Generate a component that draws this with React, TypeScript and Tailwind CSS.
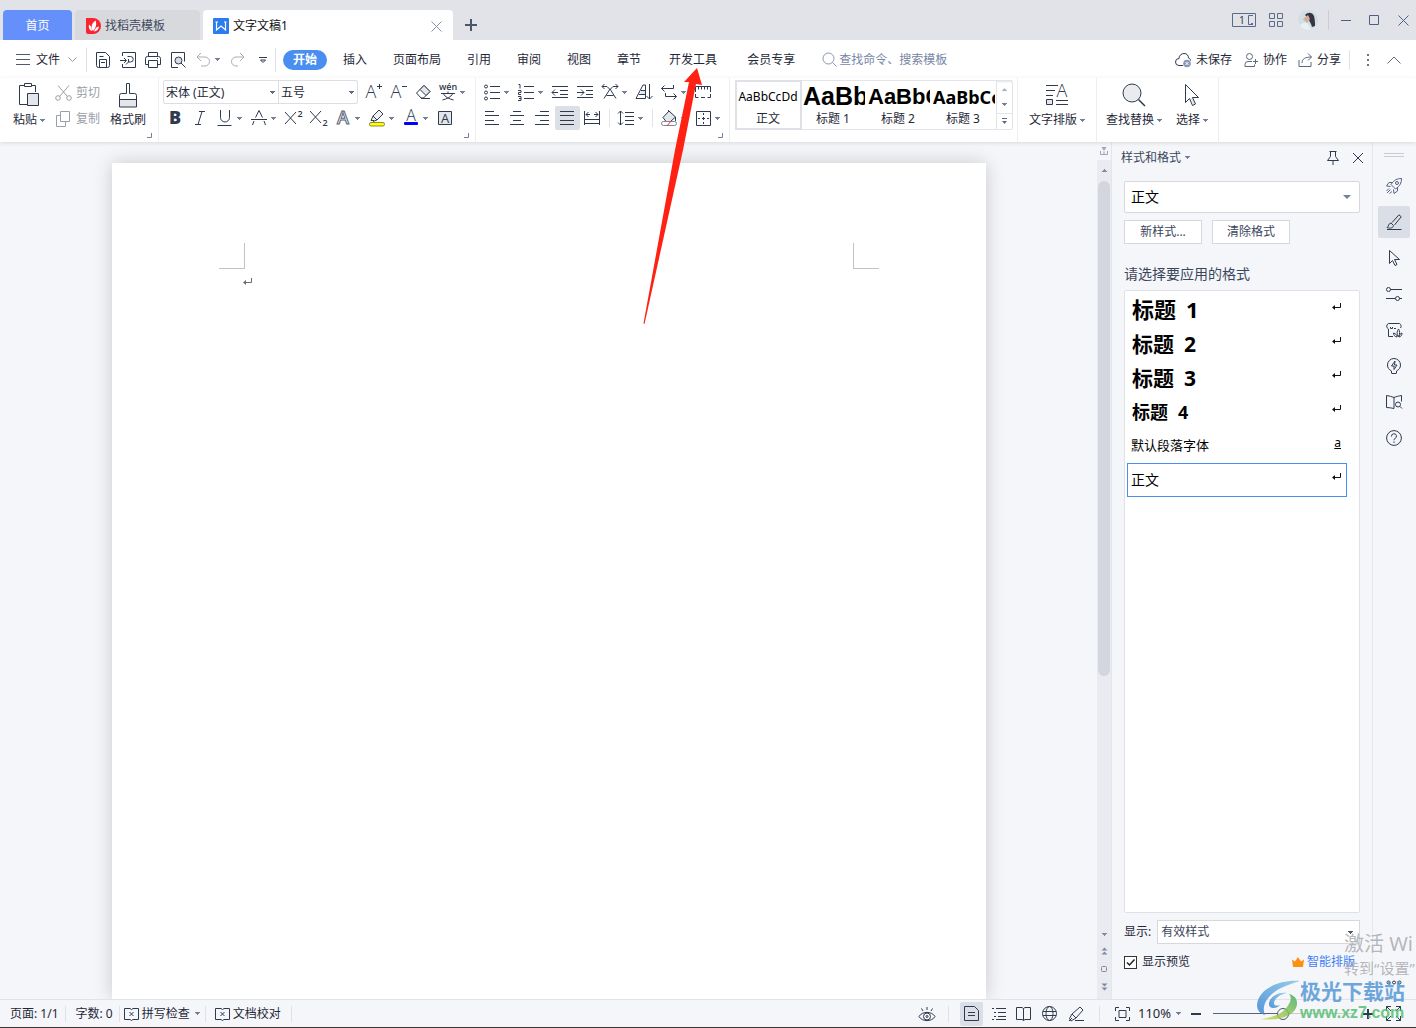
import { useState } from 'react'
import type { ReactNode } from 'react'

const INK = '#2f3a4f'

interface IconProps {
  children: ReactNode
  w?: number
  h?: number
  color?: string
  sw?: number
}

function Icon({ children, w = 20, h = 20, color = INK, sw = 1 }: IconProps) {
  return (
    <svg width={w} height={h} viewBox={`0 0 ${w} ${h}`} fill="none" stroke={color} strokeWidth={sw} className="shrink-0 overflow-visible" aria-hidden="true">
      {children}
    </svg>
  )
}

function Caret({ color = '#74809a' }: { color?: string }) {
  return (
    <svg width="5" height="3" viewBox="0 0 5 3" fill={color} className="shrink-0" aria-hidden="true">
      <path d="M0 0h5v1H4v1H3v1H2V2H1V1H0z" />
    </svg>
  )
}

// Single glyph used inside a toolbar icon
function Glyph({ x, y, size, weight = 300, color = INK, children }: { x: number; y: number; size: number; weight?: number; color?: string; children: string }) {
  return (
    <text x={x} y={y} fontSize={size} fontWeight={weight} fill={color} stroke="none" textAnchor="middle" fontFamily='"Open Sans", "Noto Sans CJK SC", sans-serif'>
      {children}
    </text>
  )
}

function Tool({ label, children, active = false }: { label: string; children: ReactNode; active?: boolean }) {
  return (
    <button aria-label={label} className={`flex h-6 w-[25px] shrink-0 items-center justify-center rounded-xs pr-px ${active ? 'bg-[#dbe0e7]' : ''}`}>
      {children}
    </button>
  )
}

function DropTool({ label, children }: { label: string; children: ReactNode }) {
  return (
    <button aria-label={label} className="flex h-6 w-[34px] shrink-0 items-center gap-0.5 pl-0.5">
      {children}
      <Caret />
    </button>
  )
}

function Launcher() {
  return (
    <button aria-label="更多设置" className="absolute right-1.5 bottom-1">
      <Icon w={5} h={5} color="#74809a"><path d="M4.500 0v4.500H0" /></Icon>
    </button>
  )
}

const divider = 'w-px shrink-0 bg-[#dfe1e6]'

function TitleBar() {
  return (
    <header className="flex h-10 shrink-0 items-end bg-[#e2e3e8] pl-[3px]">
      <button className="h-[30px] w-[69px] rounded-t-sm bg-[#6590fb] pt-0.5 text-white">首页</button>
      <button className="ml-[3px] flex h-[30px] w-[125px] items-center gap-1 rounded-t-sm bg-[#d8d9dd] pt-0.5 pl-[11px] text-[#3f4a60]">
        <svg width="15" height="16" viewBox="0 0 15 16" aria-hidden="true">
          <path d="M0 0h7a8 8 0 0 1 0 16H2a2 2 0 0 1-2-2z" fill="#fb2431" />
          <path d="M7 13C4 9 6 5 9.500 2.500C11 6 10 10 7 13z" fill="#fff" />
          <path d="M6 13C3 12 2.500 9 3 6.500C5 8 6 10 6 13zM8 13.500C9 10.500 10.500 9 13 8.500C12.500 11.500 11 13 8 13.500z" fill="#fff" />
        </svg>
        找稻壳模板
      </button>
      <div className="ml-[3px] flex h-[30px] w-[250px] items-center rounded-t-sm bg-white pt-0.5 pr-[11px] pl-[10px]">
        <svg width="16" height="16" viewBox="0 0 16 16" aria-hidden="true">
          <rect width="16" height="16" rx="1" fill="#2c7cf0" />
          <path d="M3.500 4v8L8 8l4.500 4V4M2.500 4H5M11 4h2.500" fill="none" stroke="#fff" strokeWidth="1.200" />
        </svg>
        <span className="ml-1 flex-1 text-[#111]">文字文稿1</span>
        <button aria-label="关闭标签">
          <Icon w={11} h={11} color="#8590a8"><path d="M.5.5l10 10M10.500.5l-10 10" /></Icon>
        </button>
      </div>
      <button aria-label="新建" className="ml-3 flex h-[30px] items-center">
        <Icon w={12} h={12} color="#4b566d" sw={2}><path d="M6 0v12M0 6h12" /></Icon>
      </button>
      <div className="ml-auto flex h-10 items-center pr-[7px]">
        <button aria-label="窗口布局">
          <Icon w={24} h={14} color="#5a6a88"><path d="M.5.5h23v13H.5zM21 2.500h-4.500v9H21M19 10.500h2" /><Glyph x={10} y={11} size={11} weight={400}>1</Glyph></Icon>
        </button>
        <button aria-label="应用" className="ml-[13px]">
          <Icon w={14} h={14} color="#5a6a88"><path d="M.5.5h5v5h-5zM8.500.5h5v5h-5zM.5 8.500h5v5h-5zM8.500 8.500h5v5h-5z" /></Icon>
        </button>
        <svg width="20" height="20" viewBox="0 0 20 20" className="ml-[15px]" aria-hidden="true">
          <clipPath id="face"><circle cx="10" cy="10" r="10" /></clipPath>
          <g clipPath="url(#face)">
            <rect width="20" height="20" fill="#cfdfe3" />
            <path d="M7 5c3-3 7-3 9 1 1 4 1 7 1 10l-3 1c-1-4-3-6-4-9z" fill="#383440" />
            <path d="M5 9l5-4 2 4-3 4z" fill="#d9aa9e" />
            <path d="M1 20c0-6 4-8 8-7l5 7z" fill="#e9f0f2" />
          </g>
        </svg>
        <span className="ml-[10px] h-5 w-px bg-[#cbcdd4]" />
        <button aria-label="最小化" className="ml-3"><Icon w={10} h={10} color="#4f6085"><path d="M0 5.500h10" /></Icon></button>
        <button aria-label="最大化" className="ml-[18px]"><Icon w={11} h={11} color="#4f6085"><path d="M.5.500h9v9h-9z" /></Icon></button>
        <button aria-label="关闭" className="ml-[18px]"><Icon w={11} h={11} color="#4f6085"><path d="M.5.5l10 10M10.500.5l-10 10" /></Icon></button>
      </div>
    </header>
  )
}

const tabs = ['插入', '页面布局', '引用', '审阅', '视图', '章节']
const wideTabs = ['开发工具', '会员专享']

function MenuBar() {
  return (
    <nav className="flex h-[38px] shrink-0 items-center bg-white pt-px pl-4 text-[#1f2838]">
      <button className="flex items-center">
        <Icon w={14} h={12} color="#4f5a6b"><path d="M0 .5h14M0 5.500h14M0 10.500h14" /></Icon>
        <span className="ml-1.5">文件</span>
        <span className="ml-2"><Icon w={9} h={6} color="#8d96a5"><path d="M.5.5l4 4 4-4" /></Icon></span>
      </button>
      <span className={`${divider} ml-[9px] h-6`} />
      <div className="ml-1 flex items-center">
        <Tool label="保存"><Icon w={16} h={16}><path d="M1.500.5h9l4 4v9a2 2 0 0 1-2 2h-9a2 2 0 0 1-2-2zM4.500 15.500v-8h7v8M4.500 4.500h4M6 10.500h4" /></Icon></Tool>
        <Tool label="输出为PDF"><Icon w={16} h={16}><path d="M2.500 4V.5h13v15h-13V12M0 8.500h6M4 6l2.500 2.500L4 11M7.500 4.500h3a2.500 2.500 0 0 1 0 5.500h-2v-3M6 12.500l3-3" /></Icon></Tool>
        <Tool label="打印"><Icon w={16} h={16}><path d="M3.500 4V.5h9V4M3.500 12.500h-3v-6a2 2 0 0 1 2-2h11a2 2 0 0 1 2 2v6h-3M3.500 8.500h9v7h-9zM12 6.500h1" /></Icon></Tool>
        <Tool label="打印预览"><Icon w={16} h={16}><path d="M8 15.500H1.500V.5h13v9" /><circle cx="8.500" cy="8.500" r="3.500" fill="#d9dce2" /><path d="M11 11l4.500 4.500" /></Icon></Tool>
        <button aria-label="撤销" className="flex h-6 w-[34px] items-center gap-1 pl-[5px]">
          <Icon w={15} h={15} color="#a8adb8"><path d="M5 1L1 5l4 4M1 5h8a4.500 4.500 0 0 1 0 9H5" /></Icon>
          <Caret />
        </button>
        <Tool label="恢复"><Icon w={15} h={15} color="#a8adb8"><path d="M10 1l4 4-4 4M14 5H6a4.500 4.500 0 0 0 0 9h2" /></Icon></Tool>
        <Tool label="自定义"><Icon w={9} h={8}><path d="M1 1.500h8M2.500 4l2.500 2.500L7.500 4z" /></Icon></Tool>
      </div>
      <span className={`${divider} h-6`} />
      <button className="ml-[7px] h-5 w-11 shrink-0 rounded-full bg-[#4a8ff0] font-bold text-white">开始</button>
      <div className="ml-[3px] flex">
        {tabs.map(t => <button key={t} className="px-[13px] pt-px whitespace-nowrap">{t}</button>)}
        {wideTabs.map(t => <button key={t} className="px-[15px] pt-px whitespace-nowrap">{t}</button>)}
      </div>
      <label className="ml-3 flex items-center gap-0.5">
        <Icon w={15} h={15} color="#8a94ab"><circle cx="6.500" cy="6.500" r="5.500" /><path d="M10.500 10.500l4 4" /></Icon>
        <input aria-label="查找命令" placeholder="查找命令、搜索模板" className="w-32 bg-transparent outline-none placeholder:text-[#7785a5]" />
      </label>
      <div className="ml-auto flex items-center pr-[15px] whitespace-nowrap">
        <button className="flex items-center gap-1">
          <Icon w={17} h={16}><path d="M8 13.500H4A3.500 3.500 0 0 1 4 6.500C4 3 7 1.500 9 1.500C12 1.500 13.500 3.500 13.500 6C15 6.500 15.500 7.500 15.500 8.500" /><circle cx="12" cy="11.500" r="3.800" fill="#8b98b5" stroke="none" /><path d="M10.500 10l3 3M13.500 10l-3 3" stroke="#fff" /></Icon>
          未保存
        </button>
        <button className="ml-3 flex items-center gap-1">
          <Icon w={15} h={14} color="#5a6880"><circle cx="5.500" cy="3.500" r="3" /><path d="M8 8.500H4a3 3 0 0 0-3 3v2h9.500v-2M9 8.500h5M11.500 6v5" /></Icon>
          协作
        </button>
        <button className="ml-[11px] flex items-center gap-1">
          <Icon w={15} h={14} color="#5a6880"><path d="M1 7v6.500h12V9M4 10C4 6 7 4 13.500 4M10 .5L13.500 4 10 7.500" /></Icon>
          分享
        </button>
        <span className="ml-2 h-5 w-px bg-[#dfe1e6]" />
        <button aria-label="更多" className="ml-4"><Icon w={4} h={12}><path d="M1 1h2M1 6h2M1 11h2" strokeWidth="2" stroke="#6b7689" /></Icon></button>
        <button aria-label="收起功能区" className="ml-[17px]"><Icon w={14} h={8} color="#5a6880"><path d="M.5 7.500L7 1l6.500 6.500" /></Icon></button>
      </div>
    </nav>
  )
}

function BigButton({ label, icon, drop = true }: { label: string; icon: ReactNode; drop?: boolean }) {
  return (
    <button className="flex shrink-0 flex-col items-center">
      <span className="flex h-[34px] items-center">{icon}</span>
      <span className="flex h-4 items-center gap-[3px] leading-4 whitespace-nowrap">{label}{drop && <Caret />}</span>
    </button>
  )
}

function AlignIcon({ d }: { d: string }) {
  return <Icon w={16} h={14}><path d={d} /></Icon>
}

const previews = [
  { name: '正文', text: 'AaBbCcDd', cls: 'text-xs font-["Noto_Sans"]' },
  { name: '标题 1', text: 'AaBb', cls: 'text-[25px] font-bold font-["Liberation_Sans"]' },
  { name: '标题 2', text: 'AaBbC', cls: 'text-[22px] font-bold font-["Liberation_Sans"]' },
  { name: '标题 3', text: 'AaBbCc', cls: 'text-[18px] font-bold font-["Noto_Sans"]' },
]

function Ribbon() {
  return (
    <section className="relative z-10 flex h-16 shrink-0 bg-white text-[#1f2838] shadow-[0_1px_4px_rgba(0,0,0,0.12)]">
      <div className="relative flex w-[158px] shrink-0 pl-[13px]">
        <BigButton label="粘贴" icon={
          <Icon w={22} h={24}><path d="M6 2.500H1.500v19h8M14 2.500h3.500V9" /><path d="M6.500.5h7v3h-7z" /><path d="M9.500 10.500h11v12h-11z" fill="#e3e6ea" /></Icon>
        } />
        <div className="ml-2.5 flex flex-col gap-0.5 pt-0.5 text-[#9b9fa8]">
          <button className="flex h-6 items-center gap-1 pt-0.5 whitespace-nowrap">
            <Icon w={17} h={16} color="#9b9fa8"><path d="M3 .5l9.500 11M14 .5L4.500 11.500" /><circle cx="3" cy="13" r="2.300" /><circle cx="14" cy="13" r="2.300" /></Icon>
            剪切
          </button>
          <button className="flex h-6 items-center gap-1 pt-0.5 whitespace-nowrap">
            <Icon w={17} h={16} color="#9b9fa8"><path d="M5.500.5h9v10h-9zM5.500 4.500h-4v11h9v-5" /></Icon>
            复制
          </button>
        </div>
        <div className="ml-2.5">
          <BigButton label="格式刷" drop={false} icon={
            <Icon w={20} h={25}><path d="M2 16.500h16v7.500H2z" fill="#e3e6ea" stroke="none" /><path d="M8.500 10.500v-10h3v10h5a2 2 0 0 1 2 2v11.500h-17V12.500a2 2 0 0 1 2-2h5M1.500 16.500h17" /></Icon>
          } />
        </div>
        <Launcher />
      </div>

      <div className="relative w-[317px] shrink-0 border-l border-[#eceef1] pt-0.5 pl-1">
        <div className="flex items-center">
          <div className="flex h-6 w-[195px] rounded-xs border border-[#dcdee4]">
            <label className="relative flex w-[115px] items-center border-r border-[#dcdee4]">
              <select aria-label="字体" className="w-full appearance-none bg-transparent pt-px pl-0.5 outline-none"><option>宋体 (正文)</option></select>
              <span className="pointer-events-none absolute right-[3px]"><Caret color="#5f6b82" /></span>
            </label>
            <label className="relative flex flex-1 items-center">
              <select aria-label="字号" className="w-full appearance-none bg-transparent pt-px pl-0.5 outline-none"><option>五号</option></select>
              <span className="pointer-events-none absolute right-[3px]"><Caret color="#5f6b82" /></span>
            </label>
          </div>
          <div className="ml-[3px] flex">
            <Tool label="增大字号"><Icon><Glyph x={8} y={16} size={18}>A</Glyph><path d="M14 4.500h5M16.500 2v5" /></Icon></Tool>
            <Tool label="减小字号"><Icon><Glyph x={8} y={16} size={18}>A</Glyph><path d="M14 4.500h5" /></Icon></Tool>
            <Tool label="清除格式"><Icon w={17} h={16}><path d="M1.500 9l7.500-7.500 6 6L8.500 14H6z" /><path d="M5 5.500L9 1.500l6 6-4 4z" fill="#e3e6ea" /><path d="M6 14.500h9" /></Icon></Tool>
            <DropTool label="拼音指南"><Icon><Glyph x={10} y={8} size={9} weight={600}>wén</Glyph><path d="M3 11.500h14M10 9.500v2M5.500 12c1.500 3 6 5 10 6M14.500 12c-1.500 3-6 5-10 6" /></Icon></DropTool>
          </div>
        </div>
        <div className="mt-0.5 flex">
          <Tool label="加粗"><Icon><Glyph x={10} y={16} size={18} weight={800}>B</Glyph></Icon></Tool>
          <Tool label="倾斜"><Icon><path d="M9 3.500h6M5 16.500h6M12 3.500l-4 13" /></Icon></Tool>
          <DropTool label="下划线"><Icon><path d="M5.500 2v7.500a4.500 4.500 0 0 0 9 0V2M2.500 17.500h14" /></Icon></DropTool>
          <DropTool label="删除线"><Icon><path d="M2 11.500h16M6.500 9.500L10 2.500l3.500 7M5 13l-1.500 4M15 13l1.500 4" /></Icon></DropTool>
          <Tool label="上标"><Icon><path d="M2 4l11 12M13 4L2 16" /><Glyph x={17} y={9} size={9} weight={600}>2</Glyph></Icon></Tool>
          <Tool label="下标"><Icon><path d="M2 3l11 12M13 3L2 15" /><Glyph x={17} y={18} size={9} weight={600}>2</Glyph></Icon></Tool>
          <DropTool label="文字效果"><Icon><text x="10" y="16" fontSize="18" fontWeight="600" textAnchor="middle" fill="#fff" stroke="#596479" strokeWidth="1" fontFamily='"Open Sans", sans-serif'>A</text></Icon></DropTool>
          <DropTool label="突出显示"><Icon><path d="M4 12.500L6 8l6-6 4 4-6 6-4 1.500M6 8l4 4M4 12.500h3" fill="#eef0f3" /><rect x="2.500" y="14.500" width="15" height="3.500" rx="1.500" fill="#ffff00" stroke="#8a8f3a" /></Icon></DropTool>
          <DropTool label="字体颜色"><Icon><Glyph x={10} y={13} size={16}>A</Glyph><rect x="3" y="14" width="14" height="3" rx="1" fill="#0000ff" stroke="none" /></Icon></DropTool>
          <Tool label="字符底纹"><Icon w={14} h={14}><path d="M.5.5h13v13H.5z" fill="#e3e6ea" /><Glyph x={7} y={12} size={13} weight={400}>A</Glyph></Icon></Tool>
        </div>
        <Launcher />
      </div>

      <div className="relative w-[254px] shrink-0 border-l border-[#eceef1] pt-0.5 pl-1">
        <div className="flex">
          <DropTool label="项目符号"><Icon><circle cx="4" cy="4.500" r="1.500" /><circle cx="4" cy="10.500" r="1.500" /><circle cx="4" cy="16.500" r="1.500" /><path d="M8 4.500h10M8 10.500h10M8 16.500h10" /></Icon></DropTool>
          <DropTool label="编号"><Icon><path d="M2.500 2.500h1.500v4M2 8.500h3v2H2.500v2H5M2 14.500h3v4H2M3 16.500h2M8 4.500h10M8 10.500h10M8 16.500h10" /></Icon></DropTool>
          <Tool label="减少缩进"><Icon w={16} h={14}><path d="M0 1.500h16M8 5.500h8M8 9.500h8M0 12.500h16M0 7.500h6M3 4.500l-3 3 3 3" /></Icon></Tool>
          <Tool label="增加缩进"><Icon w={16} h={14}><path d="M0 1.500h16M9 5.500h7M9 9.500h7M0 12.500h16M0 7.500h7M4 4.500l3 3-3 3" /></Icon></Tool>
          <DropTool label="字符缩放"><Icon><path d="M4 16.500L10 7l6 9.500M6.500 13.500h7M2 4.500h5M13 4.500h5M4.500 2L2 4.500 4.500 7M15.500 2L18 4.500 15.500 7M7 4.500l3 3 3-3" /></Icon></DropTool>
          <Tool label="排序"><Icon w={18} h={18}><path d="M5 11h5V7H7z" fill="#e3e6ea" stroke="none" /><path d="M1 15.500L8 2h2.500v13.500zM4 11.500h6M6 7.500h4M14.500 1v15M11.500 13l3 3 3-3" /></Icon></Tool>
          <DropTool label="换行符"><Icon><path d="M14.500 3v3.500h-12M5.500 3.500l-3 3 3 3M6.500 11v3.500h11M14.500 11.500l3 3-3 3" /></Icon></DropTool>
          <Tool label="标尺"><Icon w={18} h={14}><path d="M1.500 7V1.500h15V7M4.500 1.500v3M7.500 1.500v3M10.500 1.500v3M13.500 1.500v3M1.500 9v3.500h3M16.500 9v3.500h-3M7 12.500h4" /></Icon></Tool>
        </div>
        <div className="mt-0.5 flex items-center">
          <Tool label="左对齐"><AlignIcon d="M1 .5h9M1 4.500h14M1 9.500h9M1 13.500h14" /></Tool>
          <Tool label="居中"><AlignIcon d="M4 .5h8M1 4.500h14M4 9.500h8M1 13.500h14" /></Tool>
          <Tool label="右对齐"><AlignIcon d="M6 .5h9M1 4.500h14M6 9.500h9M1 13.500h14" /></Tool>
          <Tool label="两端对齐" active><AlignIcon d="M1 .5h14M1 4.500h14M1 9.500h14M1 13.500h14" /></Tool>
          <Tool label="分散对齐"><Icon w={16} h={16}><path d="M.5 1v14M15.500 1v14M2 4.500h4M10 4.500h4M4.500 2L2 4.500 4.500 7M11.500 2L14 4.500 11.500 7M1 9.500h14M1 13.500h14" /></Icon></Tool>
          <span className="mx-1 h-[18px] w-px bg-[#e2e4e9]" />
          <DropTool label="行距"><Icon><path d="M4.500 3v14M2 5.500L4.500 3 7 5.500M2 14.500L4.500 17 7 14.500M9 4.500h9M9 8.500h9M9 12.500h9M9 16.500h9" /></Icon></DropTool>
          <span className="mx-1 h-[18px] w-px bg-[#e2e4e9]" />
          <DropTool label="底纹颜色"><Icon><path d="M4 9.500L10 3l6.500 6-5 4.500H7z" fill="#e3e6ea" /><path d="M9 2l3 3M16.500 9v4" /><rect x="2.500" y="13.500" width="15" height="4" rx="2" fill="#fff" stroke="#7e8796" /><path d="M8 18l4-5" stroke="#f03030" /></Icon></DropTool>
          <DropTool label="边框"><Icon><path d="M3.500 3.500h14v14h-14z" /><path d="M10.500 5v2M10.500 9v3M10.500 14v2M5 10.500h2M9 10.500h3M14 10.500h2" /></Icon></DropTool>
        </div>
        <Launcher />
      </div>

      <div className="w-[288px] shrink-0 border-l border-[#eceef1] pt-0.5 pl-[5px]">
        <div className="flex h-[50px] w-[278px] rounded-xs border border-[#e2e4e9]">
          {previews.map((p, i) => (
            <button key={p.name} className={`flex w-[65px] shrink-0 flex-col items-center overflow-hidden pr-px ${i === 0 ? 'outline-2 -outline-offset-1 outline-[#dfe1e7]' : ''}`}>
              <span className={`flex h-8 items-center self-stretch overflow-hidden text-black ${i === 0 ? 'justify-center' : 'ml-0.5'} ${p.cls}`}>{p.text}</span>
              <span className="h-4 leading-3">{p.name}</span>
            </button>
          ))}
          <div className="flex flex-1 flex-col divide-y divide-[#e2e4e9] border-l border-[#e2e4e9]">
            <button aria-label="上一行" className="flex flex-1 rotate-180 items-center justify-center"><Caret color="#a5acba" /></button>
            <button aria-label="下一行" className="flex flex-1 items-center justify-center"><Caret /></button>
            <button aria-label="展开样式" className="flex flex-1 items-center justify-center"><Icon w={7} h={6} color="#5a6880"><path d="M1 .5h5" /><path d="M1 3h5L3.500 6z" fill="#5a6880" stroke="none" /></Icon></button>
          </div>
        </div>
      </div>

      <div className="flex w-[79px] shrink-0 justify-center border-l border-[#eceef1]">
        <BigButton label="文字排版" icon={
          <Icon w={24} h={24}><path d="M1 2.500h12M1 7.500h9M1 12.500h7M11 17.500h12M11 21.500h12" /><path d="M1.500 16.500h6v5h-6z" fill="#e3e6ea" /><Glyph x={17} y={14} size={18}>A</Glyph></Icon>
        } />
      </div>
      <div className="flex w-[123px] shrink-0 justify-between border-x border-[#eceef1] pr-2.5 pl-[9px]">
        <BigButton label="查找替换" icon={
          <Icon w={24} h={24}><circle cx="10" cy="10" r="9" fill="#e9ebee" /><path d="M16.500 16.500l6.500 6.500" strokeWidth="1.500" /></Icon>
        } />
        <BigButton label="选择" icon={
          <Icon w={18} h={24}><path d="M7 15l3.500 7 2-1-3-6z" fill="#e3e6ea" stroke="none" /><path d="M2.500 1.500v18l4-4 3 7 3-1.500-3-6.500h6z" /></Icon>
        } />
      </div>
    </section>
  )
}

function ReturnMark({ color = '#111' }: { color?: string }) {
  return (
    <svg width="9" height="8" viewBox="0 0 9 8" className="shrink-0" aria-hidden="true">
      <path d="M8.500 1v4.500H1" fill="none" stroke={color} />
      <path d="M0 5.500l3-2.500v5z" fill={color} />
    </svg>
  )
}

function Document() {
  return (
    <div className="min-w-0 flex-1 overflow-hidden bg-[#f5f6f9] pt-[21px]">
      <div className="mx-auto h-full w-[874px] bg-white px-[107px] pt-20 shadow-[0_0_18px_rgba(0,0,0,0.18)]">
        <div className="flex justify-between">
          <div className="h-[26px] w-[26px] border-r border-b border-[#c3c3c3]" />
          <div className="h-[26px] w-[26px] border-b border-l border-[#c3c3c3]" />
        </div>
        <div className="pt-2 pl-6"><ReturnMark color="#6c6c6c" /></div>
      </div>
    </div>
  )
}

function ScrollStrip() {
  return (
    <div className="flex w-3.5 shrink-0 flex-col items-center bg-[#e9ebf1]">
      <div className="flex h-[18px] w-full items-center justify-center bg-[#f5f6f9]">
        <Icon w={8} h={8} color="#9ca6bb"><path d="M.5 4v3.500h7V4M4 4.500v3" /><path d="M1.500 0h5L4 4z" fill="#9ca6bb" stroke="none" /></Icon>
      </div>
      <button aria-label="向上滚动" className="flex h-[21px] rotate-180 items-center"><Caret color="#7f8ba5" /></button>
      <div className="h-[495px] w-3 rounded-full bg-[#d3d6de]" />
      <div className="mt-auto flex flex-col items-center gap-[11px] pb-2">
        <button aria-label="向下滚动"><Caret color="#7f8ba5" /></button>
        <button aria-label="上一页"><Icon w={7} h={8} color="#7f8ba5"><path d="M.5 3.500L3.500.5l3 3zM.5 7.500l3-3 3 3z" fill="#7f8ba5" stroke="none" /></Icon></button>
        <button aria-label="浏览对象"><Icon w={6} h={6} color="#7f8ba5"><rect x=".5" y=".5" width="5" height="5" rx="1" /></Icon></button>
        <button aria-label="下一页"><Icon w={7} h={8} color="#7f8ba5"><path d="M.5.5l3 3 3-3zM.5 4.500l3 3 3-3z" fill="#7f8ba5" stroke="none" /></Icon></button>
      </div>
    </div>
  )
}

const headings = [
  { no: '1', cls: 'text-[22px]' },
  { no: '2', cls: 'text-[21px]' },
  { no: '3', cls: 'text-[21px]' },
  { no: '4', cls: 'text-[18px]' },
]

function StylePanel() {
  const [preview, setPreview] = useState(true)

  return (
    <aside className="flex w-[261px] shrink-0 flex-col border-l border-[#e4e6eb] bg-[#f5f6f9] pb-[29px] text-[#3a465c]">
      <div className="flex h-[31px] shrink-0 items-center pr-[9px] pl-[9px]">
        <button className="flex items-center gap-1 whitespace-nowrap">样式和格式<Caret /></button>
        <button aria-label="固定" className="ml-auto"><Icon w={14} h={14}><path d="M3.500.5h7M4.500.5v5l-3 4h11l-3-4v-5M7 9.500V14" /></Icon></button>
        <button aria-label="关闭面板" className="ml-[13px]"><Icon w={10} h={10}><path d="M0 0l10 10M10 0L0 10" /></Icon></button>
      </div>
      <div className="flex min-h-0 flex-1 flex-col pr-3 pl-3">
        <label className="relative mt-2 flex h-8 shrink-0 items-center rounded-xs border border-[#d6d8de] bg-white">
          <select aria-label="当前样式" className="w-full appearance-none bg-transparent pl-1.5 text-sm text-black outline-none"><option>正文</option></select>
          <svg width="8" height="4" viewBox="0 0 8 4" fill="#74809a" className="pointer-events-none absolute right-2" aria-hidden="true"><path d="M0 0h8L4 4z" /></svg>
        </label>
        <div className="mt-[7px] flex gap-2.5">
          <button className="h-6 w-[78px] border border-[#d6d8de] bg-white">新样式...</button>
          <button className="h-6 w-[78px] border border-[#d6d8de] bg-white">清除格式</button>
        </div>
        <h2 className="mt-5 text-sm">请选择要应用的格式</h2>
        <div className="mt-1.5 min-h-0 flex-1 rounded-xs border border-[#dfe1e6] bg-white px-0.5 pt-0.5 text-black">
          {headings.map(h => (
            <button key={h.no} className={`flex h-[34px] w-full items-center gap-2.5 pr-4 pl-[5px] font-bold ${h.cls}`}>
              <span>标题</span>
              <span className="flex-1 text-left">{h.no}</span>
              <span className="pb-2"><ReturnMark /></span>
            </button>
          ))}
          <button className="flex h-[34px] w-full items-center justify-between pr-4 pl-1 text-[13px]">
            默认段落字体
            <span className="pb-1.5 text-xs leading-4 underline">a</span>
          </button>
          <button className="flex h-[34px] w-[220px] items-center justify-between border border-[#4a8ff0] pr-[5px] pl-[3px] text-sm">
            正文
            <span className="pb-2"><ReturnMark /></span>
          </button>
        </div>
        <div className="mt-[7px] flex h-6 shrink-0 items-center gap-1.5">
          <label htmlFor="show" className="whitespace-nowrap text-[#1f2838]">显示:</label>
          <div className="relative flex h-6 flex-1 items-center border border-[#d6d8de] bg-white">
            <select id="show" className="w-full appearance-none bg-transparent pl-[3px] outline-none"><option>有效样式</option></select>
            <span className="pointer-events-none absolute right-1.5"><Caret color="#4f5a70" /></span>
          </div>
        </div>
        <div className="mt-2.5 flex shrink-0 items-center">
          <label className="flex items-center gap-[5px] text-[#1f2838]">
            <span className="relative flex">
              <input type="checkbox" checked={preview} onChange={e => setPreview(e.target.checked)} className="h-[13px] w-[13px] appearance-none border border-[#333] bg-white" />
              {preview && <svg width="13" height="13" viewBox="0 0 13 13" fill="none" stroke="#222" strokeWidth="1.500" className="pointer-events-none absolute inset-0"><path d="M3 6.500L5.500 9 10.500 3.500" /></svg>}
            </span>
            显示预览
          </label>
          <a href="#" className="mr-[5px] ml-auto flex items-center gap-[3px] text-[#3f7ef5]">
            <svg width="12" height="10" viewBox="0 0 12 10" fill="#ff8f0f" aria-hidden="true"><path d="M0 2.500l3 2L6 0l3 4.500 3-2L11 10H1z" /></svg>
            智能排版
          </a>
        </div>
      </div>
    </aside>
  )
}

const sideTools = [
  { name: '快速访问', icon: <g stroke="#56637f"><path d="M15.500.5C11 .5 8 2 5 6.500L9.500 11C14 8 15.500 5 15.500.5zM6.500 4.500H3L.5 8l4 .5M11.500 9.500V13L8 15.500l-.5-4M4.500 11.500L1 15M3 10.500L.5 13M6 13.500l-2.500 2" /><circle cx="11" cy="5" r="1.500" /></g> },
  { name: '样式', icon: <path d="M1 15.500h14.500M1 13.500c2-1 1-4 4-4.500l2.500 2.500c0 2-3 3.500-6.500 2zM6 8.500L13 .8l2.200 2L8.500 11" /> },
  { name: '选择', icon: <path d="M3.500.5v13l3-3 2.500 5 2-1-2.500-5h5z" /> },
  { name: '属性', icon: <path d="M4.500 3.500H16M0 12.500h9.500M13.500 12.500H16M.5 3.500a2 2 0 1 0 4 0 2 2 0 1 0-4 0M9.500 12.500a2 2 0 1 0 4 0 2 2 0 1 0-4 0" /> },
  { name: '稻壳资源', icon: <><path d="M7 14.500H2.500V7A3 3 0 0 1 2.500 1.500h11A3 3 0 0 1 14.500 6M4.500 5v1.500h2V5M8 6.500h2" /><path d="M12 14.500C10.500 12 11 9 12.500 7c1.500 2 1.500 5 0 7.500zM11 15c-2.500-.5-3.500-2-3.500-4 2 .5 3.500 2 3.500 4zM13 15c.5-2.500 1.500-3.500 3-4 0 2.500-1 3.500-3 4z" /></> },
  { name: '智能助手', icon: <path d="M5.500 15.500h5M5.500 15v-2C3 11.500 1.500 10 1.500 7a6.500 6.500 0 0 1 13 0c0 3-1.500 4.500-4 6v2M9 3L5.500 8H8v3.500L11 7H8.500z" /> },
  { name: '文档阅读', icon: <><path d="M8 14.500V3.500C6 2.500 3 2 .5 1.500v12c2.500 0 5 .5 7.500 1zM8 3.500c2-1 5-1.500 7.500-2v6" /><circle cx="12" cy="10.500" r="2.500" /><path d="M14 12.500l2 2" /></> },
  { name: '帮助', icon: <><circle cx="8" cy="8" r="7.400" /><path d="M5.500 6.500a2.500 2.500 0 1 1 3.500 2c-.8.400-1 .8-1 1.800M8 11.500v1.500" /></> },
]

function SideBar() {
  return (
    <div className="flex w-11 shrink-0 flex-col items-center border-l border-[#e4e6eb] bg-[#f5f6f9] pr-0.5">
      <div className="mt-[11px] h-1 w-5 shrink-0 border-y border-[#c9ccd3]" />
      <div className="mt-[13px] flex flex-col gap-1">
        {sideTools.map((t, i) => (
          <button key={t.name} aria-label={t.name} className={`flex h-8 w-8 items-center justify-center rounded-xs ${i === 1 ? 'bg-[#dadfe7]' : ''}`}>
            <Icon w={16} h={16}>{t.icon}</Icon>
          </button>
        ))}
      </div>
      <button aria-label="更多工具" className="mt-auto mb-3.5">
        <Icon w={16} h={5}><circle cx="2.500" cy="2.500" r="1.500" /><circle cx="8" cy="2.500" r="1.500" /><circle cx="13.500" cy="2.500" r="1.500" /></Icon>
      </button>
    </div>
  )
}

function CheckIcon() {
  return <Icon w={15} h={14}><path d="M6 1.500H.5v11H6M9 1.500h5.500v11H9M6 1.500l1.500 1L9 1.500M6 12.500l1.500 1 1.500-1M5.500 5l4 4M9.500 5l-4 4" /></Icon>
}

function StatusBar() {
  const [zoom, setZoom] = useState(50)

  return (
    <footer className="flex h-[29px] shrink-0 items-center border-t border-b border-t-[#e0e2e8] border-b-[#3a352e] bg-[#f5f6f9] pr-[15px] pl-2.5 whitespace-nowrap text-[#1f2838]">
      <span>页面: 1/1</span>
      <span className={`${divider} ml-1.5 h-4`} />
      <span className="ml-2.5">字数: 0</span>
      <span className={`${divider} ml-1.5 h-4`} />
      <button className="ml-1 flex items-center gap-[3px]"><CheckIcon />拼写检查<span className="ml-0.5"><Caret /></span></button>
      <span className={`${divider} ml-[5px] h-4`} />
      <button className="ml-[9px] flex items-center gap-[3px]"><CheckIcon />文档校对</button>
      <span className={`${divider} ml-2.5 h-4`} />

      <div className="ml-auto flex items-center">
        <button aria-label="护眼模式"><Icon w={18} h={16}><path d="M1 10.500C4 5 14 5 17 10.500 14 16 4 16 1 10.500zM9 1v3M3.500 2.500l1.500 2.500M14.500 2.500L13 5" /><circle cx="9" cy="10.500" r="3.500" /><circle cx="9" cy="10.500" r="1" /></Icon></button>
        <span className={`${divider} mr-[11px] ml-3 h-4`} />
        <button aria-label="页面视图" className="flex h-6 w-[23px] items-center justify-center rounded-xs bg-[#dadfe7]"><Icon w={15} h={15}><path d="M.5.5h10l4 4v10H.5zM4 6.500h7M4 9.500h7" /></Icon></button>
        <button aria-label="大纲" className="ml-2"><Icon w={15} h={14}><path d="M1 1.500h2M5 1.500h10M3 5.500h2M7 5.500h8M3 9.500h2M7 9.500h8M1 12.500h2M5 12.500h10" /></Icon></button>
        <button aria-label="阅读版式" className="ml-2.5"><Icon w={15} h={15}><path d="M6 1.500H.5v12H6l1.500 1 1.500-1h5.500v-12H9l-1.500 1zM7.500 2.500v12" /></Icon></button>
        <button aria-label="Web版式" className="ml-[11px]"><Icon w={15} h={15}><circle cx="7.500" cy="7.500" r="7" /><ellipse cx="7.500" cy="7.500" rx="3.500" ry="7" /><path d="M1 5.500h13M1 9.500h13" /></Icon></button>
        <button aria-label="写作模式" className="ml-[11px]"><Icon w={17} h={16}><path d="M1.500 12.500L4 8l8-7 3 3-7 8-5 3zM4 8l4 4M7 14.500h9M1 15l3-3" /></Icon></button>
        <span className={`${divider} mr-[15px] ml-[14px] h-4`} />
        <button aria-label="最佳显示"><Icon w={15} h={14}><path d="M.5 4V.5H4M11 .5h3.500V4M.5 10v3.500H4M11 13.500h3.500V10M4 3.500h7v7H4z" /></Icon></button>
        <button className="ml-2 flex w-[46px] items-center gap-[5px] text-[13px]">110%<Caret /></button>
        <button aria-label="缩小" className="flex w-6 justify-center"><Icon w={10} h={10} sw={2}><path d="M0 5h10" /></Icon></button>
        <input
          type="range"
          aria-label="缩放比例"
          value={zoom}
          onChange={e => setZoom(Number(e.target.value))}
          className="mx-[5px] h-4 w-[140px] appearance-none bg-[linear-gradient(90deg,#5a6376_50%,#c9cdd6_50%)] bg-[length:100%_1px] bg-center bg-no-repeat [&::-webkit-slider-thumb]:h-3 [&::-webkit-slider-thumb]:w-3 [&::-webkit-slider-thumb]:appearance-none [&::-webkit-slider-thumb]:rounded-full [&::-webkit-slider-thumb]:border [&::-webkit-slider-thumb]:border-[#4f586b] [&::-webkit-slider-thumb]:bg-[#f5f6f9]"
        />
        <button aria-label="放大" className="flex w-5 justify-center"><Icon w={10} h={10} sw={2}><path d="M0 5h10M5 0v10" /></Icon></button>
        <button aria-label="全屏" className="ml-2"><Icon w={15} h={15}><path d="M.5 5V.5H5M.5.5L5 5M10 .5h4.500V5M14.500.5L10 5M.5 10v4.500H5M.5 14.500L5 10M10 14.500h4.500V10M14.500 14.500L10 10" /></Icon></button>
      </div>
    </footer>
  )
}

function Watermarks() {
  return (
    <>
      <div className="pointer-events-none absolute right-0 bottom-12 z-20 w-[72px] whitespace-nowrap text-[#a9abb0]/85">
        <p className="text-xl leading-6">激活 Wi</p>
        <p className="text-[15px] leading-6">转到“设置”</p>
      </div>
      <div className="pointer-events-none absolute right-[11px] bottom-[5px] z-20 flex items-center opacity-80">
        <svg width="44" height="42" viewBox="0 0 44 42" aria-hidden="true">
          <defs>
            <linearGradient id="sky" x1="0" y1="1" x2="1" y2="0"><stop offset="0" stopColor="#2f7fd0" /><stop offset="1" stopColor="#7fc4ea" /></linearGradient>
            <linearGradient id="leaf" x1="0" y1="1" x2="1" y2="0"><stop offset="0" stopColor="#d5dc3c" /><stop offset="1" stopColor="#38a862" /></linearGradient>
          </defs>
          <path d="M44 1C26-1 2 8 1 25c0 6 4 9 8 10-4-9 2-20 16-27 6-3 12-5 19-7z" fill="url(#sky)" />
          <path d="M31 13c-9-2-19 5-18 12 1 4 8 4 11 0-3 1-6 1-6-2 0-4 6-9 13-10z" fill="url(#sky)" />
          <path d="M33 14c12 3 10 17-2 22-8 4-18 4-27 3 12-1 22-5 27-12 4-5 5-10 2-13z" fill="url(#leaf)" />
        </svg>
        <div className="whitespace-nowrap">
          <p className="text-[21px] leading-6 font-bold text-[#4b93d4]">极光下载站</p>
          <p className='font-["Liberation_Sans"] text-base leading-5 font-bold text-[#4dbb6a]'>www.xz7.com</p>
        </div>
      </div>
    </>
  )
}

export default function App() {
  return (
    <div className='relative flex h-screen flex-col overflow-hidden bg-white font-["Noto_Sans","Noto_Sans_CJK_SC",sans-serif] text-xs'>
      <TitleBar />
      <MenuBar />
      <Ribbon />
      <main className="flex min-h-0 flex-1">
        <Document />
        <ScrollStrip />
        <StylePanel />
        <SideBar />
      </main>
      <StatusBar />
      <svg width="80" height="260" viewBox="0 0 80 260" className="pointer-events-none absolute top-[66px] left-[640px] z-30" aria-hidden="true">
        <path d="M57 2L44 16l5 0L35 84 3.500 257.500l1 .5L43 84 56 18l6 1z" fill="#ff2114" />
      </svg>
      <Watermarks />
    </div>
  )
}
